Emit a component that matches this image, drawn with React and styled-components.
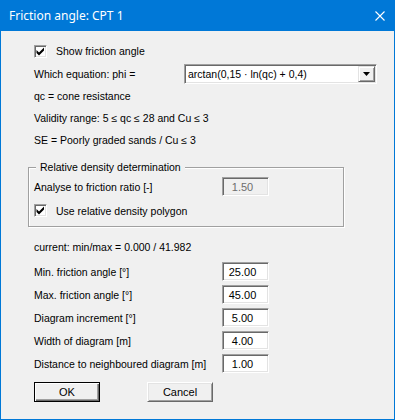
import React from 'react';
import styled, { createGlobalStyle } from 'styled-components';

const Global = createGlobalStyle`
  html, body { margin: 0; padding: 0; background: #f0f0f0; }
  body { width: 395px; height: 420px; overflow: hidden; }
`;

const Window = styled.div`
  box-sizing: border-box;
  width: 395px;
  height: 420px;
  border: 1px solid #0078d7;
  background: #f0f0f0;
  display: flex;
  flex-direction: column;
  font-family: "Liberation Sans", Arial, sans-serif;
  font-size: 10.5px;
  color: #000;
`;

const TitleBar = styled.div`
  height: 30px;
  flex: none;
  background: #0078d7;
  color: #fff;
  display: flex;
  align-items: center;
  justify-content: space-between;
  padding: 0 9px 0 8px;
  font-family: "Segoe UI", "Noto Sans", sans-serif;
  font-size: 12px;
`;

const Title = styled.span`
  line-height: 16px;
`;

const CloseIcon = styled.svg`
  display: block;
  width: 10px;
  height: 10px;
`;

const Body = styled.div`
  display: flex;
  flex-direction: column;
  padding: 9px 0 0 27px;
`;

const Row = styled.div`
  display: flex;
  align-items: center;
  height: ${(p) => p.$h || 22}px;
  margin-top: ${(p) => p.$mt || 0}px;
  padding-left: ${(p) => (p.$inset ? 0 : 6)}px;
  white-space: nowrap;
`;

const FieldRow = styled.div`
  display: grid;
  grid-template-columns: 188px 47px;
  align-items: center;
  height: ${(p) => p.$h || 23}px;
  margin-top: ${(p) => p.$mt || 0}px;
  padding-left: ${(p) => (p.$inset ? 0 : 6)}px;
  white-space: nowrap;
`;

const CheckLabel = styled.label`
  display: flex;
  align-items: center;
  gap: 9px;
`;

const CheckBox = styled.span`
  box-sizing: border-box;
  width: 13px;
  height: 13px;
  background: #fff;
  border: 1px solid;
  border-color: #a0a0a0 #fff #fff #a0a0a0;
  box-shadow: inset 1px 1px 0 #696969, inset -1px -1px 0 #e3e3e3;
  display: flex;
  align-items: center;
  justify-content: center;
  flex: none;
`;

const CheckMark = styled.svg`
  display: block;
  width: 9px;
  height: 9px;
`;

const EqLabel = styled.span`
  width: 150px;
  flex: none;
`;

const Combo = styled.div`
  box-sizing: border-box;
  width: 193px;
  height: 20px;
  background: #fff;
  border: 1px solid;
  border-color: #a0a0a0 #fff #fff #a0a0a0;
  box-shadow: inset 1px 1px 0 #696969, inset -1px -1px 0 #e3e3e3;
  padding: 1px;
  display: flex;
  align-items: center;
`;

const ComboText = styled.span`
  flex: 1;
  padding-left: 2px;
`;

const DropButton = styled.span`
  box-sizing: border-box;
  width: 17px;
  height: 16px;
  background: #f0f0f0;
  border: 1px solid;
  border-color: #e3e3e3 #696969 #696969 #e3e3e3;
  box-shadow: inset 1px 1px 0 #fff, inset -1px -1px 0 #a0a0a0;
  display: flex;
  align-items: center;
  justify-content: center;
`;

const Arrow = styled.svg`
  display: block;
  width: 7px;
  height: 4px;
`;

const Group = styled.div`
  box-sizing: border-box;
  width: 316px;
  height: 60px;
  margin-top: 16px;
  border: 1px solid #a0a0a0;
  box-shadow: inset 1px 1px 0 #fff, 1px 1px 0 #fff;
  padding: 0 0 0 5px;
  display: flex;
  flex-direction: column;
`;

const Legend = styled.span`
  align-self: flex-start;
  height: 13px;
  line-height: 13px;
  margin: -7px 0 0 2px;
  padding: 0 4px;
  background: #f0f0f0;
`;

const Field = styled.div`
  box-sizing: border-box;
  width: 47px;
  height: 19px;
  background: ${(p) => (p.$disabled ? '#f0f0f0' : '#fff')};
  color: ${(p) => (p.$disabled ? '#6d6d6d' : '#000')};
  border: 1px solid;
  border-color: #a0a0a0 #fff #fff #a0a0a0;
  box-shadow: inset 1px 1px 0 #696969, inset -1px -1px 0 #e3e3e3;
  display: flex;
  align-items: center;
  justify-content: center;
  padding-right: 6px;
  font-size: 11px;
`;

const ButtonRow = styled.div`
  display: flex;
  gap: 47px;
  margin-top: 7px;
  padding-left: 6px;
`;

const Button = styled.div`
  box-sizing: border-box;
  width: 66px;
  height: 20px;
  background: #f0f0f0;
  border: 1px solid;
  border-color: ${(p) => (p.$default ? '#000' : '#fff #696969 #696969 #fff')};
  box-shadow: ${(p) =>
    p.$default
      ? 'inset 1px 1px 0 #fff, inset -1px -1px 0 #696969, inset -2px -2px 0 #a0a0a0'
      : 'inset 1px 1px 0 #e3e3e3, inset -1px -1px 0 #a0a0a0'};
  display: flex;
  align-items: center;
  justify-content: center;
  font-size: 11px;
`;

const Check = ({ children }) => (
  <CheckLabel>
    <CheckBox>
      <CheckMark viewBox="0 0 9 9">
        <polygon points="0.5,3 3,5.5 8,0.5 8,3.5 3,8.5 0.5,6" fill="#000" />
      </CheckMark>
    </CheckBox>
    <span>{children}</span>
  </CheckLabel>
);

export default function App() {
  const fields = [
    ['Min. friction angle [°]', '25.00'],
    ['Max. friction angle [°]', '45.00'],
    ['Diagram increment [°]', '5.00'],
    ['Width of diagram [m]', '4.00'],
    ['Distance to neighboured diagram [m]', '1.00'],
  ];
  return (
    <>
      <Global />
      <Window>
        <TitleBar>
          <Title>Friction angle: CPT 1</Title>
          <CloseIcon viewBox="0 0 10 10">
            <path d="M0.5 0.5 L9.5 9.5 M9.5 0.5 L0.5 9.5" stroke="#fff" strokeWidth="1.1" fill="none" />
          </CloseIcon>
        </TitleBar>
        <Body>
          <Row>
            <Check>Show friction angle</Check>
          </Row>
          <Row $h={23}>
            <EqLabel>Which equation: phi =</EqLabel>
            <Combo>
              <ComboText>arctan(0,15 · ln(qc) + 0,4)</ComboText>
              <DropButton>
                <Arrow viewBox="0 0 7 4">
                  <polygon points="0,0 7,0 3.5,4" fill="#000" />
                </Arrow>
              </DropButton>
            </Combo>
          </Row>
          <Row>qc = cone resistance</Row>
          <Row>Validity range: 5 ≤ qc ≤ 28 and Cu ≤ 3</Row>
          <Row>SE = Poorly graded sands / Cu ≤ 3</Row>
          <Group>
            <Legend>Relative density determination</Legend>
            <FieldRow $inset $h={21} $mt={2}>
              <span>Analyse to friction ratio [-]</span>
              <Field $disabled>1.50</Field>
            </FieldRow>
            <Row $inset $h={23} $mt={2}>
              <Check>Use relative density polygon</Check>
            </Row>
          </Group>
          <Row $mt={9}>current: min/max = 0.000 / 41.982</Row>
          {fields.map(([label, value], i) => (
            <FieldRow key={label} $mt={i === 0 ? 2 : 0}>
              <span>{label}</span>
              <Field>{value}</Field>
            </FieldRow>
          ))}
          <ButtonRow>
            <Button $default>OK</Button>
            <Button>Cancel</Button>
          </ButtonRow>
        </Body>
      </Window>
    </>
  );
}
